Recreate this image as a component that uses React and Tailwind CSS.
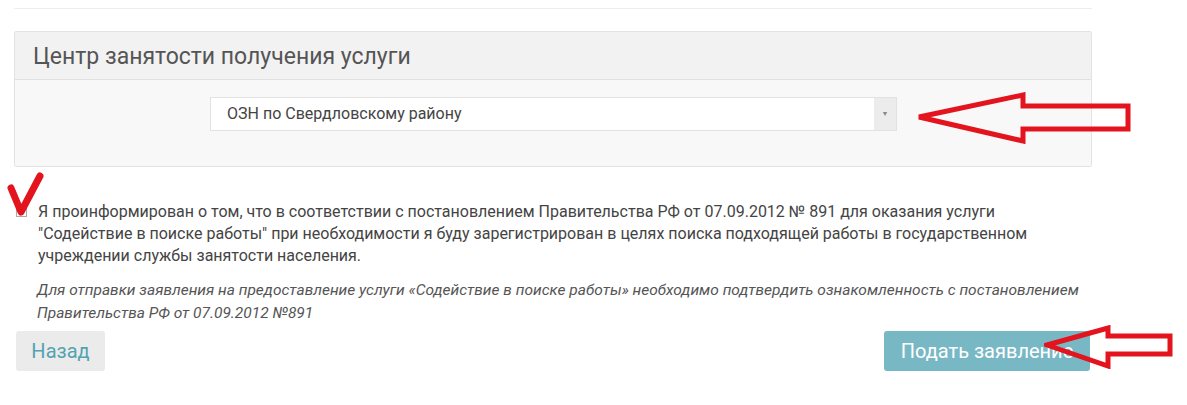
import React from "react";

// red hand-drawn style arrow pointing left, used as a hint marker
function HintArrow({ className }) {
    return (
        <svg className={className} viewBox="0 0 216 52" fill="none">
            <path
                d="M3 25 L107 3 L107 14 L212 14 L212 37 L107 37 L107 49 Z"
                stroke="#e3141d"
                strokeWidth="5"
                strokeLinejoin="miter"
            />
        </svg>
    );
}

function SmallArrow({ className }) {
    return (
        <svg className={className} viewBox="0 0 130 44" fill="none">
            <path
                d="M3 20 L64 3 L64 11 L126 11 L126 29 L64 29 L64 41 Z"
                stroke="#e3141d"
                strokeWidth="5"
            />
        </svg>
    );
}

function CheckMark({ className }) {
    return (
        <svg className={className} viewBox="0 0 38 46" fill="none">
            <path d="M5 16 L15 40 L34 4" stroke="#e3141d" strokeWidth="7" strokeLinecap="round" strokeLinejoin="round" />
        </svg>
    );
}

export default function App() {
    return (
        <div className="relative w-[1187px] h-[405px] bg-white overflow-hidden font-['Roboto',sans-serif] text-[#444]">
            <div className="ml-[14px] w-[1078px] pt-[8px]">
                <div className="h-px bg-[#eeeeee]" />

                <div className="mt-[22px] border border-[#e3e3e3] rounded-[2px]">
                    <div className="h-[48px] bg-[#f2f2f2] border-b border-[#e0e0e0] flex items-center px-[18px] pt-[3px]">
                        <h2 className="text-[23px] text-[#555]">Центр занятости получения услуги</h2>
                    </div>
                    <div className="bg-[#f8f8f8] h-[86px] flex items-start pt-[17px] pl-[195px]">
                        <div className="w-[687px] h-[34px] bg-white border border-[#e2e2e2] flex items-stretch">
                            <div className="flex-1 flex items-center pl-[16px] text-[16px] text-[#444]">
                                ОЗН по Свердловскому району
                            </div>
                            <div className="w-[22px] bg-[#ececec] flex items-center justify-center text-[7px] text-[#888]">
                                ▼
                            </div>
                        </div>
                    </div>
                </div>

                <div className="mt-[34px] flex items-start gap-[11px] pl-[2px]">
                    <div className="mt-[5px] w-[11px] h-[11px] border border-[#aaa] bg-white shrink-0" />
                    <p className="text-[16px] leading-[22px] text-[#444] w-[1010px]">
                        Я проинформирован о том, что в соответствии с постановлением Правительства РФ от 07.09.2012 № 891 для оказания услуги
                        "Содействие в поиске работы" при необходимости я буду зарегистрирован в целях поиска подходящей работы в государственном
                        учреждении службы занятости населения.
                    </p>
                </div>

                <p className="mt-[12px] ml-[23px] text-[15.5px] italic leading-[23px] text-[#555] w-[1060px]">
                    Для отправки заявления на предоставление услуги «Содействие в поиске работы» необходимо подтвердить ознакомленность с постановлением
                    Правительства РФ от 07.09.2012 №891
                </p>

                <div className="mt-[6px] flex justify-between items-center">
                    <button className="ml-[2px] h-[40px] w-[89px] bg-[#ebebeb] rounded-[3px] text-[20px] text-[#53a3b2]">
                        Назад
                    </button>
                    <button className="h-[40px] w-[206px] mr-[2px] bg-[#78b8c5] rounded-[3px] text-[20px] text-white">
                        Подать заявление
                    </button>
                </div>
            </div>

            <HintArrow className="absolute left-[916px] top-[92px] w-[216px] h-[52px]" />
            <SmallArrow className="absolute left-[1044px] top-[325px] w-[130px] h-[44px]" />
            <CheckMark className="absolute left-[6px] top-[172px] w-[38px] h-[46px]" />
        </div>
    );
}
